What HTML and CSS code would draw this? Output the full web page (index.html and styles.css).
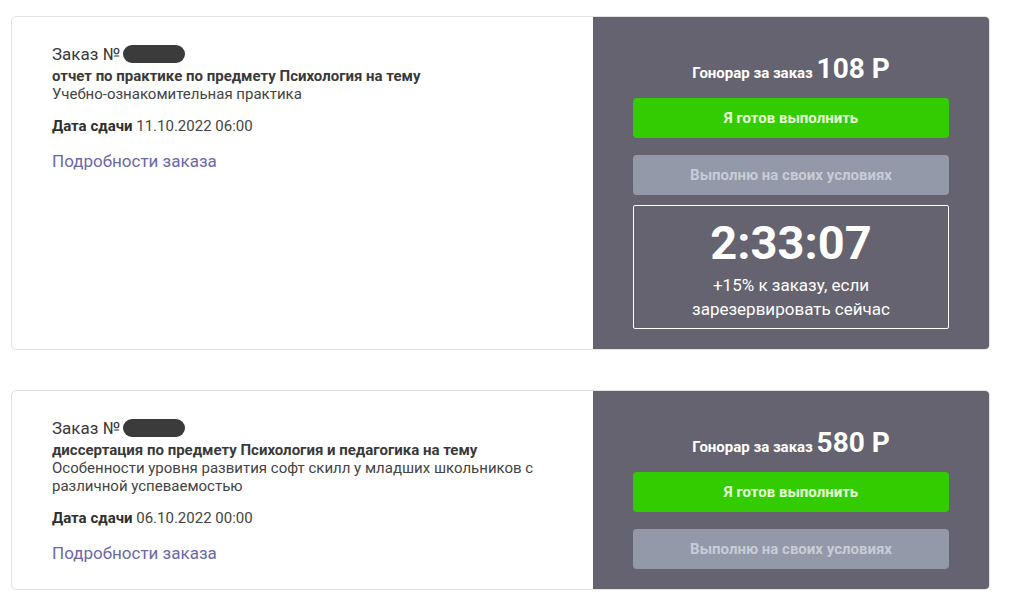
FILE: index.html
```html
<!DOCTYPE html>
<html lang="ru">
  <head>
    <meta charset="UTF-8" />
    <title>Заказы</title>
    <link rel="stylesheet" href="styles.css">
  </head>
  <body>
    <div class="list">
      <div class="order">
        <div class="info">
          <div class="number">Заказ № <span class="hidden-num"></span></div>
          <div class="subject">отчет по практике по предмету Психология на тему</div>
          <div class="topic">Учебно-ознакомительная практика</div>
          <div class="deadline"><strong>Дата сдачи</strong> 11.10.2022 06:00</div>
          <a class="details" href="#">Подробности заказа</a>
        </div>
        <div class="panel">
          <div class="fee">Гонорар за заказ <span class="sum">108 Р</span></div>
          <button class="btn btn-take">Я готов выполнить</button>
          <button class="btn btn-terms">Выполню на своих условиях</button>
          <div class="timer">
            <div class="time">2:33:07</div>
            <div class="bonus">+15% к заказу, если<br />зарезервировать сейчас</div>
          </div>
        </div>
      </div>

      <div class="order">
        <div class="info">
          <div class="number">Заказ № <span class="hidden-num"></span></div>
          <div class="subject">диссертация по предмету Психология и педагогика на тему</div>
          <div class="topic">Особенности уровня развития софт скилл у младших школьников с различной успеваемостью</div>
          <div class="deadline"><strong>Дата сдачи</strong> 06.10.2022 00:00</div>
          <a class="details" href="#">Подробности заказа</a>
        </div>
        <div class="panel">
          <div class="fee">Гонорар за заказ <span class="sum">580 Р</span></div>
          <button class="btn btn-take">Я готов выполнить</button>
          <button class="btn btn-terms">Выполню на своих условиях</button>
        </div>
      </div>
    </div>
  </body>
</html>
```

FILE: styles.css
```css
body {
  font-family: Roboto, "Liberation Sans", sans-serif;
  background-color: #ffffff;
  margin: 0;
  padding: 0;
  color: #333333;
}
.list {
  display: flex;
  flex-direction: column;
  gap: 40px;
  padding: 16px 23px 0 11px;
}
.order {
  display: flex;
  border: 1px solid #e2e2e2;
  border-radius: 5px;
  overflow: hidden;
}
.info {
  flex: 1;
  padding: 27px 40px 20px 40px;
  font-size: 15px;
  line-height: 18px;
}
.number {
  font-size: 17px;
  line-height: 20px;
  color: #3a3a3a;
  display: flex;
  align-items: center;
  gap: 3px;
}
.hidden-num {
  display: inline-block;
  width: 62px;
  height: 18px;
  border-radius: 9px;
  background-color: #3b3b3b;
}
.subject {
  margin-top: 3px;
  font-weight: bold;
  color: #3a3a3a;
}
.topic {
  color: #444444;
  max-width: 500px;
}
.deadline {
  margin-top: 14px;
  color: #444444;
}
.deadline strong {
  color: #2e2e2e;
}
.details {
  display: inline-block;
  margin-top: 16px;
  font-size: 17px;
  line-height: 20px;
  color: #6b69a6;
  text-decoration: none;
}
.panel {
  width: 396px;
  background-color: #64636f;
  padding: 37px 40px 20px 40px;
  box-sizing: border-box;
  display: flex;
  flex-direction: column;
  align-items: stretch;
}
.fee {
  text-align: center;
  color: #ffffff;
  font-weight: bold;
  font-size: 15px;
  line-height: 30px;
  height: 30px;
}
.sum {
  font-size: 28px;
}
.btn {
  height: 40px;
  border: none;
  border-radius: 4px;
  font-family: inherit;
  font-size: 15px;
  font-weight: bold;
  cursor: pointer;
}
.btn-take {
  margin-top: 14px;
  background-color: #33cc00;
  color: #e6ffd9;
}
.btn-terms {
  margin-top: 17px;
  background-color: #9399a8;
  color: #c8ccd6;
}
.timer {
  margin-top: 10px;
  border: 1px solid #ffffff;
  border-radius: 2px;
  color: #ffffff;
  text-align: center;
  padding: 9px 0 7px;
}
.time {
  font-size: 47px;
  font-weight: bold;
  line-height: 56px;
}
.bonus {
  margin-top: 2px;
  font-size: 17px;
  line-height: 24px;
}
```
